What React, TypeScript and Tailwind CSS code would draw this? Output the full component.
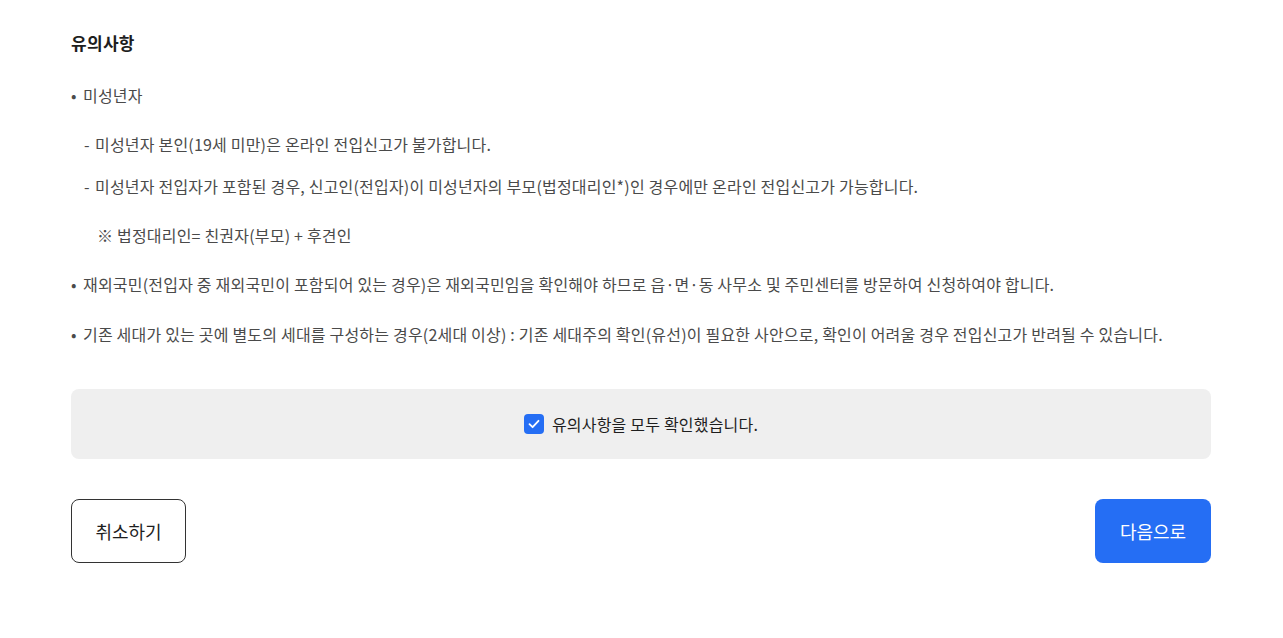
import React from "react";

const font = { fontFamily: '"Noto Sans CJK KR", "Noto Sans", sans-serif' };

const body = "text-[16px] tracking-[0.2px] leading-6 text-[#4a4a4a]";

export default function App() {
  return (
    <div className="w-[1283px] h-[638px] bg-white" style={font}>
      <div className="ml-[71px] mr-[72px] pt-[31px]">
        <h2 className="text-[17px] tracking-[0.3px] leading-6 font-bold text-[#1e1e1e]">유의사항</h2>
        <div className={`mt-[28px] flex ${body}`}>
          <span className="w-[12px] shrink-0">•</span>
          <span>미성년자</span>
        </div>
        <div className={`mt-[25px] flex pl-[13px] ${body}`}>
          <span className="w-[11px] shrink-0">-</span>
          <span>미성년자 본인(19세 미만)은 온라인 전입신고가 불가합니다.</span>
        </div>
        <div className={`mt-[18px] flex pl-[13px] ${body}`}>
          <span className="w-[11px] shrink-0">-</span>
          <span>미성년자 전입자가 포함된 경우, 신고인(전입자)이 미성년자의 부모(법정대리인*)인 경우에만 온라인 전입신고가 가능합니다.</span>
        </div>
        <div className={`mt-[25px] pl-[26px] ${body}`}>
          ※ 법정대리인= 친권자(부모) + 후견인
        </div>
        <div className={`mt-[25px] flex ${body}`}>
          <span className="w-[12px] shrink-0">•</span>
          <span>재외국민(전입자 중 재외국민이 포함되어 있는 경우)은 재외국민임을 확인해야 하므로 읍·면·동 사무소 및 주민센터를 방문하여 신청하여야 합니다.</span>
        </div>
        <div className={`mt-[26px] flex ${body}`}>
          <span className="w-[12px] shrink-0">•</span>
          <span>기존 세대가 있는 곳에 별도의 세대를 구성하는 경우(2세대 이상) : 기존 세대주의 확인(유선)이 필요한 사안으로, 확인이 어려울 경우 전입신고가 반려될 수 있습니다.</span>
        </div>
        <div className="mt-[43px] h-[70px] rounded-lg bg-[#efefef] flex items-center justify-center">
          <label className="flex items-center gap-2 text-[16px] tracking-[0.2px] text-[#1e1e1e]">
            <span className="w-5 h-5 rounded-[4px] bg-[#256ef4] flex items-center justify-center">
              <svg width="14" height="14" viewBox="0 0 14 14" fill="none">
                <path d="M2.5 7.2 L5.6 10.2 L11.5 3.8" stroke="white" strokeWidth="1.8" strokeLinecap="round" strokeLinejoin="round" />
              </svg>
            </span>
            <span>유의사항을 모두 확인했습니다.</span>
          </label>
        </div>
        <div className="mt-10 flex justify-between">
          <button className="w-[115px] h-[64px] rounded-lg border border-[#333] bg-white text-[18px] text-[#1e1e1e]">
            취소하기
          </button>
          <button className="w-[116px] h-[64px] rounded-lg bg-[#256ef4] text-[18px] text-white">
            다음으로
          </button>
        </div>
      </div>
    </div>
  );
}
